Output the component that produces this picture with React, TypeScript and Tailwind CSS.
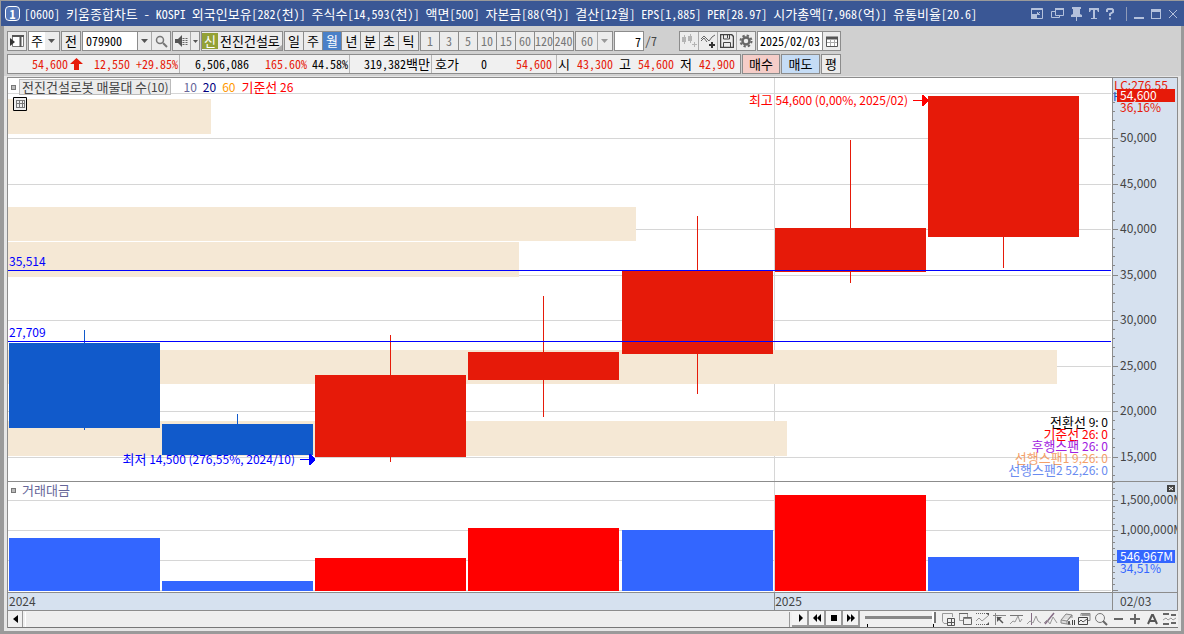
import type { ReactNode } from "react";
import { clsx } from "clsx";

const PLOT_W = 1104;
const PRICE_H = 403;
const VOLUME_H = 110;

const stats = [
  "외국인보유[282(천)]",
  "주식수[14,593(천)]",
  "액면[500]",
  "자본금[88(억)]",
  "결산[12월]",
  "EPS[1,885]",
  "PER[28.97]",
  "시가총액[7,968(억)]",
  "유통비율[20.6]",
];

const gridLines = [
  { y: 15, label: "" },
  { y: 60, label: "50,000" },
  { y: 106, label: "45,000" },
  { y: 151, label: "40,000" },
  { y: 197, label: "35,000" },
  { y: 242, label: "30,000" },
  { y: 288, label: "25,000" },
  { y: 333, label: "20,000" },
  { y: 379, label: "15,000" },
];

const volumeLines = [
  { y: 18, label: "1,500,000M" },
  { y: 48, label: "1,000,000M" },
  { y: 78, label: "" },
  { y: 108, label: "" },
];

const profile = [
  { y: 21, h: 35, w: 203 },
  { y: 129, h: 34, w: 628 },
  { y: 164, h: 35, w: 511 },
  { y: 272, h: 34, w: 1049 },
  { y: 343, h: 35, w: 779 },
];

const candles = [
  { x: 1, top: 265, bottom: 350, high: 252, low: 352, up: false, volume: 56, volumeUp: false },
  { x: 154, top: 346, bottom: 377, high: 336, low: 377, up: false, volume: 99, volumeUp: false },
  { x: 307, top: 297, bottom: 379, high: 257, low: 384, up: true, volume: 76, volumeUp: true },
  { x: 460, top: 274, bottom: 302, high: 218, low: 339, up: true, volume: 46, volumeUp: true },
  { x: 614, top: 193, bottom: 276, high: 138, low: 316, up: true, volume: 48, volumeUp: false },
  { x: 767, top: 150, bottom: 194, high: 62, low: 205, up: true, volume: 13, volumeUp: true },
  { x: 920, top: 18, bottom: 159, high: 18, low: 190, up: true, volume: 75, volumeUp: false },
];

const indicators = [
  { text: "전환선 9: 0", color: "text-black" },
  { text: "기준선 26: 0", color: "text-[#ff0000]" },
  { text: "후행스팬 26: 0", color: "text-[#a020e0]" },
  { text: "선행스팬1 9,26: 0", color: "text-[#f4a068]" },
  { text: "선행스팬2 52,26: 0", color: "text-[#6a8cf0]" },
];

const box = "flex h-5 shrink-0 border border-[#8c8c8c] bg-[#ececec]";
const chartFont = "font-['Noto_Sans_CJK_KR',sans-serif] text-[12px]";

// Hangul runs one size up from the digits beside them
function Ko({ children }: { children: string }) {
  return (
    <>
      {children.split(/([가-힣]+)/).map((part, i) =>
        i % 2 === 1 ? (
          <span key={i} className="text-[13px]">{part}</span>
        ) : (
          part
        ),
      )}
    </>
  );
}

function Caret({ color = "#555" }: { color?: string }) {
  return (
    <svg width="7" height="4" viewBox="0 0 7 4" className="pointer-events-none">
      <path d="M0 0h7L3.5 4z" fill={color} />
    </svg>
  );
}

function Arrow({ color }: { color: string }) {
  return (
    <svg width="15" height="11" shapeRendering="crispEdges">
      <path d="M0 5h9V0h1l5 5v1l-5 5H9V6H0z" fill={color} />
    </svg>
  );
}

function IconButton({ label, className, children }: { label: string; className?: string; children: ReactNode }) {
  return (
    <button aria-label={label} className={clsx("flex h-full items-center justify-center", className)}>
      {children}
    </button>
  );
}

function Segments({ items, active, muted }: { items: string[]; active?: string; muted?: boolean }) {
  return (
    <div className={clsx(box, "divide-x divide-[#8c8c8c]")}>
      {items.map((item) => (
        <button
          key={item}
          className={clsx(
            "flex w-[19px] items-center justify-center whitespace-nowrap",
            item === active && "bg-[#4a80c8] text-white",
            muted && "text-[#777]",
          )}
        >
          <Ko>{item}</Ko>
        </button>
      ))}
    </div>
  );
}

function TitleBar() {
  return (
    <header className="flex h-[25px] items-center bg-[#3a5795] pl-1 text-white">
      <span className="flex size-[15px] shrink-0 items-center justify-center rounded-sm border border-white bg-[#5577b8] text-[12px] font-bold">
        1
      </span>
      <h1 className="ml-1 min-w-0 flex-1 truncate">
        <Ko>{`[0600] 키움종합차트 - KOSPI ${stats.join(" ")}`}</Ko>
      </h1>
      <div className="flex shrink-0 items-center gap-[7px] pr-[6px] text-[#b4c1dc]">
        <button aria-label="화면 축소">
          <svg width="13" height="13" fill="none" stroke="currentColor">
            <path d="M.5 1.5h11v10H.5z" />
            <path d="M.5 2h11" strokeWidth="2" />
            <path d="M0 7h6v5H0z" fill="currentColor" stroke="none" />
            <path d="M9 5L6.5 7.500M6.500 5v2.500H9" />
          </svg>
        </button>
        <button aria-label="창 복제">
          <svg width="13" height="13" fill="none" stroke="currentColor">
            <path d="M4.5 1.5h8v7h-8z" />
            <path d="M4 2h9" strokeWidth="2" />
            <path d="M4 4.5H.5v6h8V9" />
          </svg>
        </button>
        <button aria-label="고정">
          <svg width="11" height="14" fill="currentColor">
            <path d="M1 0h9v2H9v5l2 1v2H6v4H5v-4H0V8l2-1V2H1z" />
          </svg>
        </button>
        <button aria-label="글꼴">
          <svg width="10" height="12" fill="currentColor">
            <path d="M0 0h10v4H9L8 2H6v8h2v1H2v-1h2V2H2L1 4H0z" />
          </svg>
        </button>
        <button aria-label="도움말">
          <svg width="9" height="12" fill="none" stroke="currentColor" strokeWidth="2">
            <path d="M1 4V2l1-1h4l1 1v2L4 6v2M4 9.500v2" />
          </svg>
        </button>
        <span className="ml-1 h-[14px] w-px bg-[#8f9bb8]" />
        <button aria-label="최소화">
          <svg width="10" height="12" fill="currentColor">
            <path d="M0 9h10v2H0z" />
          </svg>
        </button>
        <button aria-label="최대화">
          <svg width="10" height="10" fill="currentColor">
            <path d="M0 0h10v10H0zM1 3v6h8V3z" fillRule="evenodd" />
          </svg>
        </button>
        <button aria-label="닫기">
          <svg width="10" height="10" stroke="currentColor">
            <path d="M1 1l8 8M9 1L1 9" />
          </svg>
        </button>
      </div>
    </header>
  );
}

function Toolbar() {
  return (
    <div className="flex h-5 items-center gap-px">
      <button aria-label="메뉴 보기" className={clsx(box, "w-5 items-center justify-center")}>
        <svg width="14" height="14" fill="none" stroke="#555">
          <path d="M2.5 1.500h11v11h-11z" fill="#fff" stroke="#777" />
          <path d="M2 2h12M10.500 2v11" strokeWidth="2" />
          <path d="M0 4l5 4-5 4z" fill="#333" stroke="none" />
        </svg>
      </button>
      <label className={clsx(box, "relative w-8 text-[13px]")}>
        <select aria-label="종목 구분" className="w-full appearance-none bg-linear-to-r from-white from-55% to-[#ececec] to-55% pl-[2px] outline-none">
          <option>주</option>
        </select>
        <span className="absolute top-[7px] right-[4px] flex"><Caret /></span>
      </label>
      <button className={clsx(box, "w-5 items-center justify-center text-[13px]")}>전</button>
      <div className={clsx(box, "w-[89px]")}>
        <input aria-label="종목코드" defaultValue="079900" className="w-[54px] bg-white pl-[3px] outline-none" />
        <IconButton label="최근 종목" className="w-[14px] border-l border-[#8c8c8c]"><Caret /></IconButton>
        <IconButton label="종목 검색" className="flex-1 border-l border-[#aaa]">
          <svg width="13" height="13" fill="none" stroke="#777">
            <circle cx="5" cy="5" r="3.500" strokeWidth="1.500" />
            <path d="M8 8l4 4" strokeWidth="2" />
          </svg>
        </IconButton>
      </div>
      <div className={clsx(box, "w-7")}>
        <IconButton label="소리" className="w-[17px]">
          <svg width="13" height="12">
            <path d="M0 4h3l4-4v12L3 8H0z" fill="#555" />
            <path d="M8.500 3v7M11.500 3v7" stroke="#666" strokeWidth="2" strokeDasharray="1 1" />
          </svg>
        </IconButton>
        <IconButton label="소리 설정" className="flex-1 border-l border-[#aaa]">
          <svg width="5" height="3"><path d="M0 0h5L2.500 3z" fill="#555" /></svg>
        </IconButton>
      </div>
      <div className={clsx(box, "relative w-[82px] items-center overflow-hidden text-[13px] whitespace-nowrap")}>
        <span className="mr-[2px] flex h-4 w-4 shrink-0 items-center justify-center bg-[#93a136] text-white">신</span>
        전진건설로
        <svg width="7" height="5" className="absolute right-0 bottom-0"><path d="M7 0v5H0z" fill="#aaa" /></svg>
      </div>
      <Segments items={["일", "주", "월", "년"]} active="월" />
      <div className="-ml-[3px]"><Segments items={["분", "초", "틱"]} /></div>
      <Segments items={["1", "3", "5", "10", "15", "60", "120", "240"]} muted />
      <label className={clsx(box, "relative w-[38px] text-[#777]")}>
        <select aria-label="분 단위" className="w-full appearance-none pl-[5px] outline-none">
          <option>60</option>
        </select>
        <span className="absolute top-0 right-[14px] h-full w-px bg-[#aaa]" />
        <span className="absolute top-[7px] right-[4px] flex"><Caret color="#999" /></span>
      </label>
      <input aria-label="조회 위치" defaultValue="7" className={clsx(box, "w-[30px] bg-white! pr-[2px] text-right outline-none")} />
      <span className="w-[33px] text-[#444]">/7</span>
      <div className={clsx(box, "w-[77px] divide-x divide-[#aaa]")}>
        <IconButton label="봉 추가" className="flex-1">
          <svg width="15" height="14" fill="#b4b4b4">
            <path d="M0 3h2V1h1v2h1v5H3v2H2V8H0zM6 2h2V0h1v2h1v5H9v2H8V7H6zM10 10h2V8h1v2h2v1h-2v2h-1v-2h-2z" />
          </svg>
        </IconButton>
        <IconButton label="지표 추가" className="flex-1">
          <svg width="15" height="14" fill="none" stroke="#666">
            <path d="M0 5l3-3 5 5 3-4 3-2M0 7l3-3 3 4" />
            <path d="M8 11h6M11 8v6" stroke="#333" strokeWidth="2" />
          </svg>
        </IconButton>
        <IconButton label="저장" className="flex-1">
          <svg width="14" height="14" fill="none" stroke="#444">
            <path d="M.5.500h11l2 2v11H.5z" strokeWidth="1.500" />
            <path d="M3.500 1v4h6V1M7.500 1v3M3.500 13V8.500h7V13" />
          </svg>
        </IconButton>
        <IconButton label="설정" className="flex-1">
          <svg width="14" height="14" fill="none" stroke="#666">
            <circle cx="7" cy="7" r="5.500" strokeWidth="2" strokeDasharray="2.300 2.020" />
            <circle cx="7" cy="7" r="3.500" strokeWidth="2.500" />
          </svg>
        </IconButton>
      </div>
      <div className={clsx(box, "w-[84px]")}>
        <input aria-label="조회 일자" defaultValue="2025/02/03" className="w-16 bg-white pl-[2px] outline-none" />
        <IconButton label="달력" className="flex-1 border-l border-[#8c8c8c]">
          <svg width="12" height="11" fill="none" stroke="#555">
            <path d="M.5 1.500h11v9H.5z" fill="#fff" />
            <path d="M0 2h12" strokeWidth="3" />
            <path d="M4.500 4v6M8.500 4v6M1 6.500h10" stroke="#aaa" />
          </svg>
        </IconButton>
      </div>
    </div>
  );
}

function QuoteBar() {
  return (
    <div className="mt-[3px] flex h-5 items-center gap-px text-right">
      <div className="flex h-5 w-[734px] items-center border border-[#8c8c8c] bg-[#f0f0f0] text-[#e61a09]">
        <span className="w-[60px]">54,600</span>
        <svg width="13" height="12" className="ml-[2px]"><path d="M6.500 0L13 6H9v6H4V6H0z" fill="#e61a09" /></svg>
        <span className="w-[47px]">12,550</span>
        <span className="w-12">+29.85%</span>
        <span className="ml-px h-full w-px bg-[#b4b4b4]" />
        <span className="w-[69px] text-black">6,506,086</span>
        <span className="w-[58px]">165.60%</span>
        <span className="w-[41px] text-black">44.58%</span>
        <span className="ml-px h-full w-px bg-[#b4b4b4]" />
        <span className="w-20 whitespace-nowrap text-black"><Ko>319,382백만</Ko></span>
        <span className="ml-px h-full w-px bg-[#b4b4b4]" />
        <span className="w-[27px] text-[13px] text-black">호가</span>
        <span className="w-7 text-black">0</span>
        <span className="w-[65px]">54,600</span>
        <span className="ml-1 h-full w-px bg-[#b4b4b4]" />
        <span className="w-[13px] text-[13px] text-black">시</span>
        <span className="w-[43px]">43,300</span>
        <span className="w-[18px] text-[13px] text-black">고</span>
        <span className="w-[43px]">54,600</span>
        <span className="w-[18px] text-[13px] text-black">저</span>
        <span className="w-[43px]">42,900</span>
      </div>
      <button className="h-5 w-[38px] border border-[#8c8c8c] bg-[#f5cdc8] text-[13px]">매수</button>
      <button className="h-5 w-[39px] border border-[#8c8c8c] bg-[#c5dcf5] text-[13px]">매도</button>
      <button className="h-5 w-5 border border-[#8c8c8c] bg-[#ececec] text-[13px]">평</button>
    </div>
  );
}

function PricePane() {
  return (
    <section className={clsx(chartFont, "relative min-w-0 flex-1 bg-white")}>
      <svg
        viewBox={`0 0 ${PLOT_W} ${PRICE_H}`}
        preserveAspectRatio="none"
        shapeRendering="crispEdges"
        className="block h-[403px] w-full"
      >
        {gridLines.map(({ y }) => (
          <rect key={y} y={y} width={PLOT_W - 1} height="1" fill="#d6d6d6" />
        ))}
        <rect x="766" width="1" height={PRICE_H} fill="#d6d6d6" />
        {profile.map((row) => (
          <rect key={row.y} y={row.y} width={row.w} height={row.h} fill="#f5e8d5" />
        ))}
        {candles.map((c) => (
          <g key={c.x} fill={c.up ? "#e61a09" : "#115acb"}>
            <rect x={c.x} y={c.top} width="151" height={c.bottom - c.top} />
            <rect x={c.x + 75} y={c.high} width="1" height={c.low - c.high} />
          </g>
        ))}
        <rect y="192" width={PLOT_W - 1} height="1" fill="#0000ff" />
        <rect y="263" width={PLOT_W - 1} height="1" fill="#0000ff" />
      </svg>

      <div className="absolute top-px left-[3px] flex items-center leading-[14px] whitespace-nowrap">
        <span className="mr-[3px] size-[5px] border border-[#777] bg-[#bbb]" />
        <span className="border border-[#bbb] bg-[#ececec] px-[2px] text-[#444]"><Ko>전진건설로봇 매물대 수(10)</Ko></span>
        <div className="ml-3 flex gap-[6px]">
          <span className="text-[#666699]">10</span>
          <span className="text-[#000080]">20</span>
          <span className="text-[#ff9900]">60</span>
          <span className="text-[#ff0000]"><Ko>기준선 26</Ko></span>
        </div>
      </div>
      <button aria-label="매물대 표" className="absolute top-[19px] left-[5px]">
        <svg width="14" height="14" fill="none" stroke="#777">
          <path d="M.5.5h13v13H.5z" fill="#eee" stroke="#000" />
          <path d="M3 3.500h9M3 6.500h9M3 10.500h9M3.500 3v8M6.500 3v8M9.500 3v8M11.500 3v8" />
        </svg>
      </button>

      <div className="text-[#0000ff]">
        <span className="absolute top-44 left-px leading-[14px]">35,514</span>
        <span className="absolute top-[247px] left-px leading-[14px]">27,709</span>
        <div
          className="absolute top-[374px] flex items-center gap-[5px] leading-[14px] whitespace-nowrap"
          style={{ right: `${((PLOT_W - 307) / PLOT_W) * 100}%` }}
        >
          <span><Ko>최저 14,500 (276,55%, 2024/10)</Ko></span>
          <Arrow color="#0000ff" />
        </div>
      </div>
      <div
        className="absolute top-[15px] flex items-center gap-[5px] leading-[14px] whitespace-nowrap text-[#ff0000]"
        style={{ right: `${((PLOT_W - 920) / PLOT_W) * 100}%` }}
      >
        <span><Ko>최고 54,600 (0,00%, 2025/02)</Ko></span>
        <Arrow color="#ff0000" />
      </div>
      <ul className="absolute right-1 bottom-[5px] text-right leading-[12px]">
        {indicators.map((item) => (
          <li key={item.text} className={clsx("h-3", item.color)}><Ko>{item.text}</Ko></li>
        ))}
      </ul>
    </section>
  );
}

function PriceAxis() {
  return (
    <svg width="64" height={PRICE_H} className={clsx(chartFont, "block bg-[#d6e1ef]")} fill="#444">
      {gridLines.map(({ y, label }) => (
        <g key={y}>
          <rect y={y} width="5" height="1" fill="#888" />
          {[9, 18, 27, 36].map((step) => (
            <rect key={step} y={y + step} width="2" height="1" fill="#888" />
          ))}
          <text x="7" y={y + 4}>{label}</text>
        </g>
      ))}
      <text x="1" y="12" fill="#e61a09">LC:276,55</text>
      <text x="0" y="23" fill="#115acb">H</text>
      <rect x="4" y="11" width="58" height="13" fill="#e61a09" />
      <text x="7" y="22" fill="#fff">54,600</text>
      <text x="7" y="34" fill="#e61a09">36,16%</text>
    </svg>
  );
}

function VolumePane() {
  return (
    <section className="relative min-w-0 flex-1 bg-white">
      <svg
        viewBox={`0 0 ${PLOT_W} ${VOLUME_H}`}
        preserveAspectRatio="none"
        shapeRendering="crispEdges"
        className="block h-[110px] w-full"
      >
        {volumeLines.map(({ y }) => (
          <rect key={y} y={y} width={PLOT_W - 1} height="1" fill="#d6d6d6" />
        ))}
        <rect x="766" width="1" height={VOLUME_H} fill="#d6d6d6" />
        {candles.map((c) => (
          <rect
            key={c.x}
            x={c.x}
            y={c.volume}
            width="151"
            height={109 - c.volume}
            fill={c.volumeUp ? "#ff0000" : "#3366ff"}
          />
        ))}
      </svg>
      <div className="absolute top-px left-[3px] flex items-center gap-[6px] text-[13px] leading-[14px] text-[#666699]">
        <span className="size-[5px] border border-[#777] bg-[#bbb]" />
        거래대금
      </div>
    </section>
  );
}

function VolumeAxis() {
  return (
    <svg width="64" height={VOLUME_H} className={clsx(chartFont, "block overflow-hidden bg-[#d6e1ef]")} fill="#444">
      {volumeLines.map(({ y, label }) => (
        <g key={y}>
          <rect y={y} width="5" height="1" fill="#888" />
          {[6, 12, 18, 24].map((step) => (
            <rect key={step} y={y - step} width="2" height="1" fill="#888" />
          ))}
          <text x="7" y={y + 4}>{label}</text>
        </g>
      ))}
      <rect x="54" y="3" width="8" height="7" fill="#444" />
      <path d="M56 5l4 3M60 5l-4 3" stroke="#fff" />
      <rect x="4" y="68" width="58" height="13" fill="#3366ff" />
      <text x="7" y="79" fill="#fff">546,967M</text>
      <text x="7" y="91" fill="#3366ff">34,51%</text>
    </svg>
  );
}

const playback = [
  { label: "재생", d: "M5 2l4 4-4 4z" },
  { label: "뒤로", d: "M6 2v8L2 6zM10 2v8L6 6z" },
  { label: "정지", d: "M3 3h6v6H3z" },
  { label: "앞으로", d: "M2 2l4 4-4 4zM6 2l4 4-4 4z" },
];

const tools = [
  { label: "창 추가", icon: <><path d="M7 11.500H3l-1.500-2v-8h10V5" stroke="#999" /><path d="M6.500 6.500h7v7h-7zM10.500 6.500v7M6.500 10.500h7" stroke="#555" /></> },
  { label: "창 겹치기", icon: <><path d="M5 8.500H1.500v-7h8V5" stroke="#999" /><path d="M1 1.500h9M5.500 5.500h8v7h-8z" stroke="#666" /><path d="M5 6.500h9" stroke="#888" /></> },
  { label: "지표 영역", icon: <><path d="M1 1.500h12M1 12.500h12" stroke="#666" strokeDasharray="1 1" /><path d="M1 9l3-3 3 3 6-5" stroke="#999" /><path d="M11 1l3 3V1zM11 13l3-3v3z" fill="#555" stroke="none" /></> },
  { label: "기준점", icon: <><path d="M1 3.500h13M3.500 1v12" stroke="#888" /><path d="M5 5l6 6" stroke="#555" strokeWidth="1.500" /><path d="M5 5h5l-5 5z" fill="#555" stroke="none" /></> },
  { label: "수평선", icon: <><path d="M1 3.500h13" stroke="#777" /><path d="M1 12l3-3 2 1 3-6 2 6 2-3" stroke="#999" /></> },
  { label: "수직선", icon: <><path d="M5.500 1v12" stroke="#846b84" /><path d="M1 12l3-3 3 2 3-7 2 5 3 2" stroke="#999" /></> },
  { label: "추세선", icon: <><path d="M2 12L11 1" stroke="#846b84" strokeWidth="1.500" /><path d="M1 11l3-3 3 4 3-7 4 6" stroke="#999" /></> },
  { label: "모두 지우기", icon: <><path d="M1 8l5-6 6 1-5 6zM1 8v3l6 1V9l5-6v3" stroke="#888" fill="#ddd" /><path d="M8 13l1-4 1 4M12.500 8v5M14.500 8v5" stroke="#444" /></> },
  { label: "차트 복사", icon: <><path d="M4 4V1.500h9v7h-3" stroke="#888" /><path d="M5 3h8" stroke="#999" strokeWidth="2" /><path d="M1.500 5.500h9v7h-9z" fill="#f0f0f0" stroke="#444" /><path d="M2 10l2-2 2 2 4-3" stroke="#555" /></> },
  { label: "돋보기", icon: <><circle cx="6" cy="6" r="4.500" stroke="#777" /><path d="M9 9l4 4" stroke="#666" strokeWidth="2" /></> },
  { label: "축소", icon: <path d="M3 7h9" stroke="#666" strokeWidth="2" /> },
  { label: "확대", icon: <path d="M2 7h10M7 2v10" stroke="#666" strokeWidth="2" /> },
  { label: "자동", icon: <path d="M3 12l4-9h1l4 9M4 9h7" stroke="#555" strokeWidth="2" /> },
  { label: "지표 목록", icon: <><path d="M1 2h6M9 3h5M1 12h6M9 11h5" stroke="#666" strokeWidth="2" /><path d="M1 8l3-2 2 2 3-2 2 2 3-2" stroke="#999" /></> },
];

function BottomBar() {
  return (
    <footer className="flex h-[17px] items-center border-b border-[#777] bg-[#f0f0f0]">
      <button aria-label="왼쪽으로" className="flex h-full w-[15px] items-center justify-center border-r border-[#999]">
        <svg width="5" height="8"><path d="M5 0v8L0 4z" /></svg>
      </button>
      <div className="mr-[2px] ml-[2px] h-[15px] flex-1 border-r border-l border-r-[#999] border-l-white bg-[#eee]" />
      {playback.map((item) => (
        <button
          key={item.label}
          aria-label={item.label}
          className="flex h-4 w-[17px] items-center justify-center border-r-2 border-b-2 border-[#999] bg-[#f4f4f4]"
        >
          <svg width="12" height="12"><path d={item.d} /></svg>
        </button>
      ))}
      <div className="mr-1 ml-[5px] w-[71px]">
        <input
          type="range"
          aria-label="재생 속도"
          defaultValue="100"
          className="block h-3 w-full appearance-none bg-transparent [&::-webkit-slider-runnable-track]:h-[3px] [&::-webkit-slider-runnable-track]:bg-[#888] [&::-webkit-slider-thumb]:-mt-1 [&::-webkit-slider-thumb]:h-[11px] [&::-webkit-slider-thumb]:w-1 [&::-webkit-slider-thumb]:appearance-none [&::-webkit-slider-thumb]:border-r-2 [&::-webkit-slider-thumb]:border-[#777] [&::-webkit-slider-thumb]:bg-white"
        />
        <div className="flex justify-between px-[2px]">
          <span className="h-[3px] w-px bg-black" />
          <span className="h-[3px] w-px bg-black" />
        </div>
      </div>
      {tools.map((tool) => (
        <button key={tool.label} aria-label={tool.label} className="flex h-4 w-[17px] items-center justify-center">
          <svg width="15" height="14" fill="none">{tool.icon}</svg>
        </button>
      ))}
    </footer>
  );
}

export default function App() {
  return (
    <div className="min-h-screen border-t border-r-3 border-b-3 border-l-4 border-[#9a9a9a] bg-[#e6e6e6] font-['Noto_Sans_Mono_CJK_KR','Noto_Sans_CJK_KR',sans-serif] text-[12px] leading-[18px] text-black">
      <div className="-mr-[3px] -ml-[3px]">
        <TitleBar />
      </div>
      <div className="overflow-hidden border-b border-[#e6e6e6] bg-[#d0d0d0] pt-[5px] pb-[2px] pl-[3px]">
        <Toolbar />
        <QuoteBar />
      </div>
      <main className="mr-[3px] ml-[3px] border-t border-l border-[#8c8c8c]">
        <div className="flex">
          <PricePane />
          <div className="border-r border-l border-[#8c8c8c]"><PriceAxis /></div>
        </div>
        <div className="flex border-t border-[#8c8c8c]">
          <VolumePane />
          <div className="border-r border-l border-[#8c8c8c]"><VolumeAxis /></div>
        </div>
        <div className={clsx(chartFont, "flex h-[19px] border-t border-b border-[#8c8c8c] bg-[#d6e1ef] leading-[16px] text-[#444]")}>
          <div className="flex flex-1">
            <span className="w-[69.4%] pl-px">2024</span>
            <span className="flex-1 border-l border-[#8c8c8c]">2025</span>
          </div>
          <span className="w-[66px] border-r border-l border-[#8c8c8c] pl-[7px]">02/03</span>
        </div>
        <BottomBar />
      </main>
    </div>
  );
}
